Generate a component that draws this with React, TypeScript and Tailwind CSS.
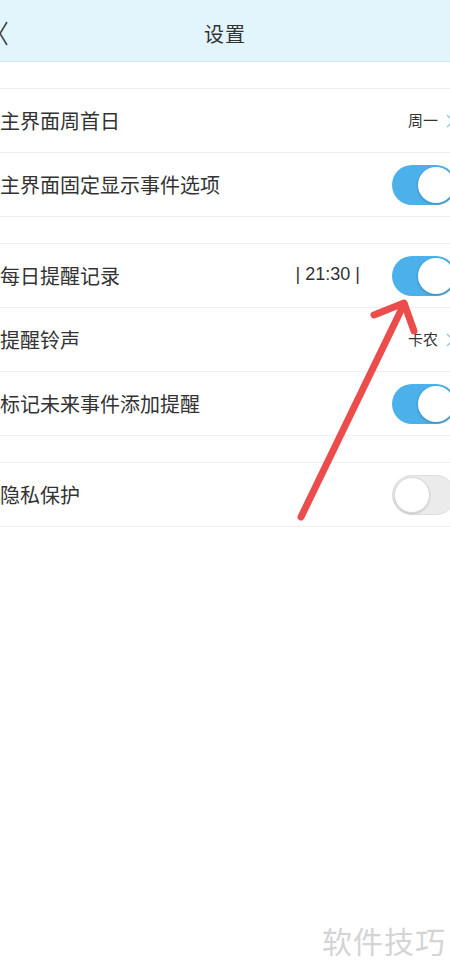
import React from 'react';

const font = { fontFamily: '"Noto Sans CJK SC", "Noto Sans", sans-serif' };

function Toggle({ on }: { on: boolean }) {
  if (on) {
    return (
      <div className="w-[64px] h-[40px] rounded-full bg-[#4cb1ea] flex items-center justify-end pr-[2px] -mr-[6px]">
        <div className="w-[36px] h-[36px] rounded-full bg-white shadow-[0_1px_3px_rgba(0,0,0,0.25)]" />
      </div>
    );
  }
  return (
    <div className="w-[64px] h-[40px] rounded-full bg-[#ebebeb] border border-[#dedede] flex items-center justify-start pl-[1px] -mr-[6px]">
      <div className="w-[36px] h-[36px] rounded-full bg-white border border-[#d8d8d8] shadow-[0_1px_2px_rgba(0,0,0,0.15)]" />
    </div>
  );
}

function Chevron() {
  return (
    <svg width="8" height="14" viewBox="0 0 8 14" className="ml-[8px] -mr-[4px]">
      <path d="M1 1l6 6-6 6" fill="none" stroke="#8ccaee" strokeWidth="1.4" />
    </svg>
  );
}

function Row({ label, children }: { label: string; children?: React.ReactNode }) {
  return (
    <div className="h-[64px] border-b border-[#efefef] flex items-center justify-between">
      <span className="text-[20px] text-[#333] whitespace-nowrap">{label}</span>
      <div className="flex items-center">{children}</div>
    </div>
  );
}

function Spacer() {
  return <div className="h-[27px] border-b border-[#efefef]" />;
}

export default function App() {
  return (
    <div className="relative w-[450px] h-[974px] bg-white overflow-hidden" style={font}>
      {/* Header */}
      <div className="h-[62px] bg-[#e2f4fc] border-b border-[#d3e6ef] flex items-center justify-center pt-[6px] relative">
        <svg width="10" height="26" viewBox="0 0 10 26" className="absolute left-[-2px] top-[21px]">
          <path d="M9 1L2 12.5 9 24" fill="none" stroke="#444" strokeWidth="1.6" />
        </svg>
        <span className="text-[20px] text-[#333] tracking-[1px]">设置</span>
      </div>

      <Spacer />
      <Row label="主界面周首日">
        <span className="text-[15px] text-[#333]">周一</span>
        <Chevron />
      </Row>
      <Row label="主界面固定显示事件选项">
        <Toggle on />
      </Row>

      <Spacer />
      <Row label="每日提醒记录">
        <span className="text-[18px] text-[#333] mr-[32px] -mt-[2px]" style={{ fontFamily: '"Liberation Sans", Arial, sans-serif' }}>
          | 21:30 |
        </span>
        <Toggle on />
      </Row>
      <Row label="提醒铃声">
        <span className="text-[15px] text-[#333]">卡农</span>
        <Chevron />
      </Row>
      <Row label="标记未来事件添加提醒">
        <Toggle on />
      </Row>

      <Spacer />
      <Row label="隐私保护">
        <Toggle on={false} />
      </Row>

      {/* Watermark */}
      <div className="absolute right-[4px] top-[918px] text-[30px] text-[#d4d4d4] tracking-[1px]">软件技巧</div>

      {/* Red annotation arrow */}
      <svg className="absolute left-0 top-0 pointer-events-none" width="450" height="974" viewBox="0 0 450 974">
        <g stroke="#ec4c4c" strokeWidth="7" strokeLinecap="round" strokeLinejoin="round" fill="none">
          <path d="M301 517L404 304" />
          <path d="M374 315L404 303 414 331" />
        </g>
      </svg>
    </div>
  );
}
